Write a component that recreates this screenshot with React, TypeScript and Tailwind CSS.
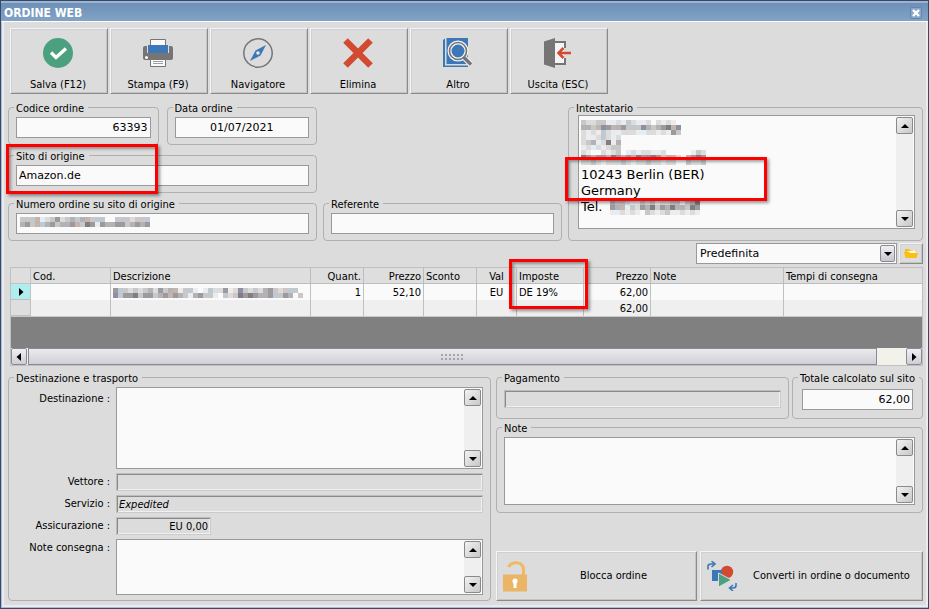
import { useState, type ReactNode } from 'react';
import clsx from 'clsx';

// ============================================================================
// Costanti
// ============================================================================

const UI_FONT = "font-['DejaVu_Sans_Condensed','DejaVu_Sans',sans-serif]";
const FIELD_FONT = "font-['DejaVu_Sans',sans-serif]";

const RAISED =
  'border border-t-[#f4f4f4] border-l-[#f4f4f4] border-b-[#8a8a8a] border-r-[#8a8a8a] shadow-[inset_1px_1px_0_#cfcfd6,inset_-1px_-1px_0_#c4c4c4]';

const SUNKEN =
  'border border-t-[#bcbcbc] border-l-[#bcbcbc] border-b-[#cacad2] border-r-[#cacad2] shadow-[inset_1px_1px_0_#8a8a8a,inset_-1px_-1px_0_#f0f0f0]';

const EDIT = 'border border-[#999999] bg-[#fafafa] outline-none';

/** Colori dei riquadri che coprono i dati personali */
const MOSAIC_COLORS: Record<string, string> = {
  a: '#fafafa',
  b: '#ececee',
  c: '#dcdcdc',
  d: '#c8c8c8',
  e: '#b4b2b4',
  f: '#9c9a9e',
  g: '#827c84',
  h: '#e4ecf6',
  i: '#c0c8d2',
  j: '#e2d8d4',
  k: '#c6b4ac',
  l: '#8c90a4',
};

const MOSAIC_ORDER = ['ddikhcdfcdeiekdiiaadidjddi', 'efdkiefdeefkdgfbfeeffdefef'];

const MOSAIC_NAME = [
  'dccddbhchdchbcacbcba',
  'eedklfkefdidledefgkl',
  'cbcbichbcjcbhccbcbfd',
];

const MOSAIC_COMPANY = ['cbhjicbc', 'jdehcgbe', 'bchcbcdd'];

const MOSAIC_STREET = [
  'cbaacbcdahcbccbbcaaaaabdc',
  'gfeffegfefegflgfdekcaefgf',
  'ccdcbcccdcbccdccbccaadccd',
];

const MOSAIC_PHONE = ['edichbdcdhccdibdeg', 'fekhdcfegdfegeedgf', 'bhcbcbadcbcdbbcbcb'];

const MOSAIC_ITEM = [
  'fidcdcdecfdekbdibahiccfbjldcdcefdjdiia',
  'liffgdffdefkfedbefddbaijdgfgfeefidfead',
];

interface Column {
  key: string;
  label: string;
  width: string;
  align: string;
}

const COLUMNS: Column[] = [
  { key: 'cod', label: 'Cod.', width: 'w-20', align: 'text-left' },
  { key: 'descrizione', label: 'Descrizione', width: 'w-[200px]', align: 'text-left' },
  { key: 'quantita', label: 'Quant.', width: 'w-[53px]', align: 'text-right' },
  { key: 'prezzo', label: 'Prezzo', width: 'w-[60px]', align: 'text-right' },
  { key: 'sconto', label: 'Sconto', width: 'w-[53px]', align: 'text-left' },
  { key: 'val', label: 'Val', width: 'w-10', align: 'text-center' },
  { key: 'imposte', label: 'Imposte', width: 'w-[67px]', align: 'text-left' },
  { key: 'totale', label: 'Prezzo', width: 'w-[67px]', align: 'text-right' },
  { key: 'note', label: 'Note', width: 'w-[133px]', align: 'text-left' },
  { key: 'tempi', label: 'Tempi di consegna', width: 'w-auto', align: 'text-left' },
];

const ROWS: Array<Record<string, ReactNode>> = [
  {
    descrizione: <Mosaic rows={MOSAIC_ITEM} />,
    quantita: '1',
    prezzo: '52,10',
    val: 'EU',
    imposte: 'DE 19%',
    totale: '62,00',
  },
  { totale: '62,00' },
];

// ============================================================================
// Icone
// ============================================================================

function SaveIcon() {
  return (
    <svg width="30" height="30" viewBox="0 0 30 30" aria-hidden="true">
      <circle cx="15" cy="15" r="15" fill="#4ba07f" />
      <path d="M8 14.500l5 5L23 10.500" fill="none" stroke="#fff" strokeWidth="3.400" />
    </svg>
  );
}

function PrintIcon() {
  return (
    <svg width="30" height="30" viewBox="0 0 30 30" aria-hidden="true">
      <path d="M0 10q0-2 2-2h2v7h22V8h2q2 0 2 2v10q0 2-2 2H2q-2 0-2-2z" fill="#757575" />
      <path d="M7.500 1.500h15v7h-15z" fill="#fafafa" stroke="#757575" />
      <path d="M5 7h20v8H5z" fill="#3c78b8" />
      <circle cx="3.500" cy="19.500" r="1.500" fill="#fff" />
      <path d="M7.500 21.500h15v7h-15z" fill="#fafafa" stroke="#757575" />
      <path d="M10 23.500h10M10 25.500h10" stroke="#a0a0a0" />
    </svg>
  );
}

function CompassIcon() {
  return (
    <svg width="30" height="30" viewBox="0 0 30 30" aria-hidden="true">
      <circle cx="15" cy="15" r="14.200" fill="none" stroke="#757575" strokeWidth="1.500" />
      <path d="M23 7l-5.500 10.500L7 23l5.500-10.500z" fill="#3c78b8" />
      <circle cx="15" cy="15" r="1.800" fill="#e8e8e8" />
    </svg>
  );
}

function DeleteIcon() {
  return (
    <svg width="30" height="30" viewBox="0 0 30 30" aria-hidden="true">
      <path d="M2.500 2.500l25 25M27.500 2.500l-25 25" stroke="#d24b31" strokeWidth="6.500" />
    </svg>
  );
}

function SearchBookIcon() {
  return (
    <svg width="30" height="30" viewBox="0 0 30 30" aria-hidden="true">
      <path d="M0 2l2-1.500V27.500h23V29H0z" fill="#3c78b8" />
      <path d="M3.500 0H25v26H3.500z" fill="#3c78b8" />
      <path d="M20.500 19l7.500 7.500" stroke="#f0f0f0" strokeWidth="5.500" />
      <circle cx="15" cy="13" r="8.500" fill="#3c78b8" stroke="#f4f4f4" strokeWidth="4" />
      <circle cx="15" cy="13" r="8.500" fill="none" stroke="#757575" strokeWidth="1.600" />
      <path d="M20.500 19l7.500 7.500" stroke="#757575" strokeWidth="3.400" />
    </svg>
  );
}

function ExitIcon() {
  return (
    <svg width="30" height="30" viewBox="0 0 30 30" aria-hidden="true">
      <path d="M12 5h9v20h-9z" fill="#f4f4f4" />
      <path d="M12 4h10v6M22 20v6H12" fill="none" stroke="#757575" strokeWidth="2" />
      <path d="M1 3.500L12 0v30L1 26.500z" fill="#757575" />
      <path d="M28 15H16M20.500 10l-5 5 5 5" fill="none" stroke="#d24b31" strokeWidth="2.600" />
    </svg>
  );
}

function FolderIcon() {
  return (
    <svg width="14" height="12" viewBox="0 0 14 12" aria-hidden="true">
      <path d="M1 1h4l1 1h6v4H1z" fill="#fdbe12" />
      <path d="M3 3.500L11 2l1 3H3z" fill="#fffbe8" />
      <path d="M0 4h5l1 1h8l-1.500 5H1.500z" fill="#fdbe12" />
    </svg>
  );
}

function UnlockIcon() {
  return (
    <svg width="24" height="31" viewBox="0 0 24 31" aria-hidden="true">
      <path d="M5.500 6C9 0 20.500 0 20.500 9v5" fill="none" stroke="#f2b862" strokeWidth="3" />
      <path d="M0 13.500h24V30.500H0z" fill="#eab564" />
      <circle cx="12" cy="20" r="2.600" fill="#fff" />
      <path d="M10.500 20h3v7h-3z" fill="#fff" />
    </svg>
  );
}

function ConvertIcon() {
  return (
    <svg width="30" height="30" viewBox="0 0 30 30" aria-hidden="true">
      <circle cx="20" cy="11" r="6.200" fill="#d24b31" />
      <path d="M5 9h10v11H5z" fill="#3c78b8" />
      <path d="M11.500 12l13 7-13 7z" fill="#4ba07f" stroke="#dcdcdc" strokeWidth="1" />
      <path d="M1 8.500V5.500Q1 3 4 3h3M4.500 0l3.500 3-3.500 3" fill="none" stroke="#3c78b8" strokeWidth="1.600" />
      <path d="M29 22v2.500Q29 27 26 27h-3M26 24l-3.500 3 3.500 3" fill="none" stroke="#3c78b8" strokeWidth="1.600" />
    </svg>
  );
}

function Triangle({ dir }: { dir: 'up' | 'down' | 'left' | 'right' }) {
  const paths = {
    up: 'M4 2l4 4H0z',
    down: 'M4 6L0 2h8z',
    left: 'M1.500 4L6 0v8z',
    right: 'M6.500 4L2 0v8z',
  };
  return (
    <svg width="8" height="8" viewBox="0 0 8 8" aria-hidden="true">
      <path d={paths[dir]} fill="#000" />
    </svg>
  );
}

/**
 * Riquadri che nascondono un dato personale
 */
function Mosaic({ rows }: { rows: string[] }) {
  const width = rows[0].length * 5;
  const height = rows.length * 5;
  return (
    <svg
      width={width}
      height={height}
      viewBox={`0 0 ${width} ${height}`}
      shapeRendering="crispEdges"
      className="block"
      aria-hidden="true"
    >
      {rows.map((row, y) =>
        row
          .split('')
          .map((c, x) => (
            <rect key={`${x}-${y}`} x={x * 5} y={y * 5} width="5" height="5" fill={MOSAIC_COLORS[c]} />
          ))
      )}
    </svg>
  );
}

// ============================================================================
// Componenti di base
// ============================================================================

/**
 * Cornice rossa di evidenziazione
 */
function Highlight({ className }: { className: string }) {
  return (
    <div
      className={clsx(
        'pointer-events-none absolute z-10 border-3 border-[#fe0000] shadow-[2px_2px_3px_rgba(0,0,0,0.4),inset_2px_2px_3px_rgba(0,0,0,0.35)]',
        className
      )}
    />
  );
}

function Group({ label, className, children }: { label: string; className?: string; children: ReactNode }) {
  return (
    <fieldset className={clsx('min-w-0 rounded-[4px] border border-[#b0b0b0] px-[7px]', className)}>
      <legend className="-ml-[2px] h-[13px] pr-1 pl-[2px] leading-[15px] whitespace-nowrap">{label}</legend>
      {children}
    </fieldset>
  );
}

function ScrollButton({ dir }: { dir: 'up' | 'down' }) {
  return (
    <button
      type="button"
      tabIndex={-1}
      aria-label={dir === 'up' ? 'Scorri su' : 'Scorri giù'}
      className="flex size-[17px] items-center justify-center rounded-[2px] border border-[#8a8a8a] bg-linear-to-br from-[#f2f2f2] to-[#c8c8c8]"
    >
      <Triangle dir={dir} />
    </button>
  );
}

function Memo({
  id,
  label,
  className,
  defaultValue,
}: {
  id?: string;
  label?: string;
  className: string;
  defaultValue?: string;
}) {
  return (
    <div className={clsx('flex', EDIT, className)}>
      <textarea
        id={id}
        aria-label={label}
        defaultValue={defaultValue}
        className={clsx(
          'min-w-0 flex-1 resize-none overflow-hidden px-[2px] pt-[3px] text-[13px] leading-4 outline-none',
          FIELD_FONT
        )}
      />
      <div className="m-px flex w-[17px] flex-col justify-between bg-[#efefef]">
        <ScrollButton dir="up" />
        <ScrollButton dir="down" />
      </div>
    </div>
  );
}

function ToolButton({ label, icon }: { label: string; icon: ReactNode }) {
  return (
    <button type="button" className={clsx('flex h-[66px] w-[98px] flex-col items-center pt-[9px] pr-[2px]', RAISED)}>
      {icon}
      <span className="mt-[9px] leading-4">{label}</span>
    </button>
  );
}

// ============================================================================
// Sezioni
// ============================================================================

function Toolbar() {
  return (
    <div className="ml-[2px] flex gap-[2px]">
      <ToolButton label="Salva (F12)" icon={<SaveIcon />} />
      <ToolButton label="Stampa (F9)" icon={<PrintIcon />} />
      <ToolButton label="Navigatore" icon={<CompassIcon />} />
      <ToolButton label="Elimina" icon={<DeleteIcon />} />
      <ToolButton label="Altro" icon={<SearchBookIcon />} />
      <ToolButton label="Uscita (ESC)" icon={<ExitIcon />} />
    </div>
  );
}

function OrderHeader() {
  const input = clsx('block h-[21px] w-full px-[2px] text-[11px]', EDIT, FIELD_FONT);
  return (
    <div className="mt-[7px] flex gap-[6px]">
      <div className="flex w-[309px] flex-col gap-1">
        <div className="flex gap-2">
          <Group label="Codice ordine" className="flex-1 pt-[3px] pb-[6px]">
            <input aria-label="Codice ordine" defaultValue="63393" className={clsx(input, 'text-right')} />
          </Group>
          <Group label="Data ordine" className="flex-1 pt-[3px] pb-[6px]">
            <input aria-label="Data ordine" defaultValue="01/07/2021" className={clsx(input, 'text-center')} />
          </Group>
        </div>
        <div className="relative">
          <Group label="Sito di origine" className="pt-[3px] pb-[6px]">
            <input aria-label="Sito di origine" defaultValue="Amazon.de" className={input} />
          </Group>
          <Highlight className="-top-[5px] -left-[2px] h-[50px] w-[152px]" />
        </div>
        <Group label="Numero ordine su sito di origine" className="pt-[3px] pb-[6px]">
          <div className="relative">
            <input aria-label="Numero ordine su sito di origine" className={input} />
            <div className="pointer-events-none absolute top-1 left-1">
              <Mosaic rows={MOSAIC_ORDER} />
            </div>
          </div>
        </Group>
      </div>
      <Group label="Referente" className="w-[239px] self-end pt-[3px] pb-[6px]">
        <input aria-label="Referente" className={input} />
      </Group>
      <Group label="Intestatario" className="flex-1 pt-px pb-[10px]">
        <div className="relative ml-[2px]">
          <Memo
            label="Intestatario"
            className="h-[114px]"
            defaultValue={'\n\n\n10243 Berlin (BER)\nGermany\nTel.'}
          />
          <div className="pointer-events-none absolute top-[5px] left-[3px]">
            <Mosaic rows={MOSAIC_NAME} />
            <Mosaic rows={MOSAIC_COMPANY} />
            <Mosaic rows={MOSAIC_STREET} />
          </div>
          <div className="pointer-events-none absolute top-[85px] left-[32px]">
            <Mosaic rows={MOSAIC_PHONE} />
          </div>
          <Highlight className="top-[42px] -left-[13px] h-[44px] w-[202px]" />
        </div>
      </Group>
    </div>
  );
}

function LayoutPicker() {
  const [layout, setLayout] = useState('Predefinita');
  return (
    <div className="mt-[2px] flex justify-end gap-[2px]">
      <div className="relative w-[201px]">
        <select
          aria-label="Vista griglia"
          value={layout}
          onChange={(e) => setLayout(e.target.value)}
          className={clsx('block h-[21px] w-full appearance-none px-[3px] text-[11px]', EDIT, FIELD_FONT)}
        >
          <option>Predefinita</option>
        </select>
        <span className="pointer-events-none absolute top-[2px] right-[2px] flex h-[17px] w-[15px] items-center justify-center rounded-[2px] border border-[#8a8a94] bg-linear-to-b from-[#f0f0f4] to-[#c6c6ce]">
          <Triangle dir="down" />
        </span>
      </div>
      <button
        type="button"
        aria-label="Apri vista"
        className={clsx('flex h-[21px] w-6 items-center justify-center', RAISED)}
      >
        <FolderIcon />
      </button>
    </div>
  );
}

function OrderGrid() {
  const scroll =
    'flex w-4 items-center justify-center rounded-[2px] border border-[#8a8a94] bg-linear-to-b from-[#f0f0f4] to-[#cdcdd4]';
  return (
    <div className="mt-[3px] ml-[2px] border border-[#c0c0c0]">
      <table className="w-full table-fixed border-separate border-spacing-0">
        <thead>
          <tr className="bg-[#dedede]">
            <th className="h-4 w-5 border-r border-b border-[#c4c4c4] p-0" aria-label="Riga" />
            {COLUMNS.map((column) => (
              <th
                key={column.key}
                scope="col"
                className={clsx(
                  'relative h-4 border-r border-b border-[#bcbcbc] px-[2px] pt-[2px] pb-0 leading-[13px] font-normal last:border-r-0',
                  column.width,
                  column.align
                )}
              >
                {column.label}
                {column.key === 'imposte' && <Highlight className="-top-[9px] -left-[8px] h-[50px] w-[79px]" />}
              </th>
            ))}
          </tr>
        </thead>
        <tbody>
          {ROWS.map((row, index) => (
            <tr key={index} className={index === 0 ? 'bg-[#fafafa]' : 'bg-[#efefef]'}>
              <td
                className={clsx(
                  'h-4 border-r border-b border-[#c0c0c0] p-0',
                  index === 0 ? 'bg-[#aeeeee]' : 'bg-[#dedede]'
                )}
              >
                {index === 0 && (
                  <div className="flex justify-center">
                    <Triangle dir="right" />
                  </div>
                )}
              </td>
              {COLUMNS.map((column) => (
                <td
                  key={column.key}
                  className={clsx(
                    'h-4 overflow-hidden border-r border-[#c0c0c0] px-[2px] pt-[2px] pb-0 leading-[14px] whitespace-nowrap last:border-r-0',
                    column.align
                  )}
                >
                  {row[column.key]}
                </td>
              ))}
            </tr>
          ))}
        </tbody>
      </table>
      <div className="h-8 border-t border-[#c8c8c8] bg-[#808080]" />
      <div className="flex h-[17px] bg-[#f2f1ea]">
        <button type="button" aria-label="Scorri a sinistra" className={scroll}>
          <Triangle dir="left" />
        </button>
        <div className="ml-px flex flex-1 items-center justify-center border border-[#8a8a94] bg-linear-to-b from-[#ebebef] to-[#cfcfd6]">
          <svg width="23" height="6" viewBox="0 0 23 6" shapeRendering="crispEdges" aria-hidden="true">
            <path d="M0 1h23M0 5h23" stroke="#a4a4ac" strokeWidth="2" strokeDasharray="2 2" />
          </svg>
        </div>
        <div className="w-[29px]" />
        <button type="button" aria-label="Scorri a destra" className={scroll}>
          <Triangle dir="right" />
        </button>
      </div>
    </div>
  );
}

function Shipping() {
  const label = 'text-right leading-[18px] whitespace-nowrap';
  const field = clsx('block h-[18px] w-full bg-transparent px-[2px] outline-none', SUNKEN);
  return (
    <Group label="Destinazione e trasporto" className="pt-[3px] pb-[5px]">
      <div className="grid grid-cols-[94px_1fr] gap-x-[6px] gap-y-1">
        <label htmlFor="destinazione" className={clsx(label, 'mt-[3px]')}>
          Destinazione :
        </label>
        <Memo id="destinazione" className="h-[82px]" />
        <label htmlFor="vettore" className={label}>
          Vettore :
        </label>
        <input id="vettore" readOnly className={field} />
        <label htmlFor="servizio" className={label}>
          Servizio :
        </label>
        <input id="servizio" readOnly value="Expedited" className={clsx(field, 'italic')} />
        <label htmlFor="assicurazione" className={label}>
          Assicurazione :
        </label>
        <div className="w-[95px]">
          <input id="assicurazione" readOnly value="EU 0,00" className={clsx(field, 'text-right')} />
        </div>
        <label htmlFor="note-consegna" className={label}>
          Note consegna :
        </label>
        <Memo id="note-consegna" className="h-14" />
      </div>
    </Group>
  );
}

function Summary() {
  const action = clsx('flex h-[50px] items-center pl-[6px]', RAISED);
  return (
    <div className="flex min-w-0 flex-col">
      <div className="flex gap-[3px]">
        <Group label="Pagamento" className="flex-1 pt-[6px] pb-[10px]">
          <input
            aria-label="Pagamento"
            readOnly
            className={clsx('block h-[18px] w-full bg-transparent outline-none', SUNKEN)}
          />
        </Group>
        <Group label="Totale calcolato sul sito" className="w-[131px] pt-[5px] pb-2">
          <div className="px-[2px]">
            <input
              aria-label="Totale calcolato sul sito"
              defaultValue="62,00"
              className={clsx('block h-[21px] w-full px-[2px] text-right text-[11px]', EDIT, FIELD_FONT)}
            />
          </div>
        </Group>
      </div>
      <Group label="Note" className="mt-[2px] pt-[3px] pb-[7px]">
        <Memo label="Note" className="h-[68px]" />
      </Group>
      <div className="mt-auto flex gap-[3px]">
        <button type="button" className={clsx(action, 'w-[201px]')}>
          <UnlockIcon />
          <span className="flex-1 pl-1">Blocca ordine</span>
        </button>
        <button type="button" className={clsx(action, 'flex-1 pl-[3px]')}>
          <ConvertIcon />
          <span className="flex-1 pl-1">Converti in ordine o documento</span>
        </button>
      </div>
    </div>
  );
}

// ============================================================================
// Finestra principale
// ============================================================================

export default function App() {
  return (
    <div
      className={clsx(
        'flex min-h-screen flex-col border border-[#3a4a64] text-[11px] leading-4 text-black',
        UI_FONT
      )}
    >
      <header className="flex h-5 items-center justify-between border-t-2 border-[#9db4d0] bg-linear-to-b from-[#6c90b8] to-[#83a3c6] pt-px pr-[6px] pl-[3px]">
        <h1 className="text-xs font-bold text-white">ORDINE WEB</h1>
        <button
          type="button"
          aria-label="Chiudi"
          className="flex size-3 items-center justify-center rounded-[2px] border border-[#6386ae] bg-[#8ba8c8]"
        >
          <svg width="8" height="8" viewBox="0 0 8 8" aria-hidden="true">
            <path d="M1 1l6 6M7 1L1 7" stroke="#fff" strokeWidth="2.400" />
          </svg>
        </button>
      </header>
      <main className="flex flex-1 flex-col border-t border-b border-l border-t-white border-b-[#a9bed6] border-l-[#a9bed6]">
        <div className="flex-1 border-x-2 border-b-2 border-[#ebebee] bg-[#dcdcdc] pt-[6px] pr-[3px] pb-1 pl-1">
          <Toolbar />
          <OrderHeader />
          <LayoutPicker />
          <OrderGrid />
          <div className="mt-[5px] grid grid-cols-[483fr_427fr] gap-[5px]">
            <Shipping />
            <Summary />
          </div>
        </div>
      </main>
    </div>
  );
}
